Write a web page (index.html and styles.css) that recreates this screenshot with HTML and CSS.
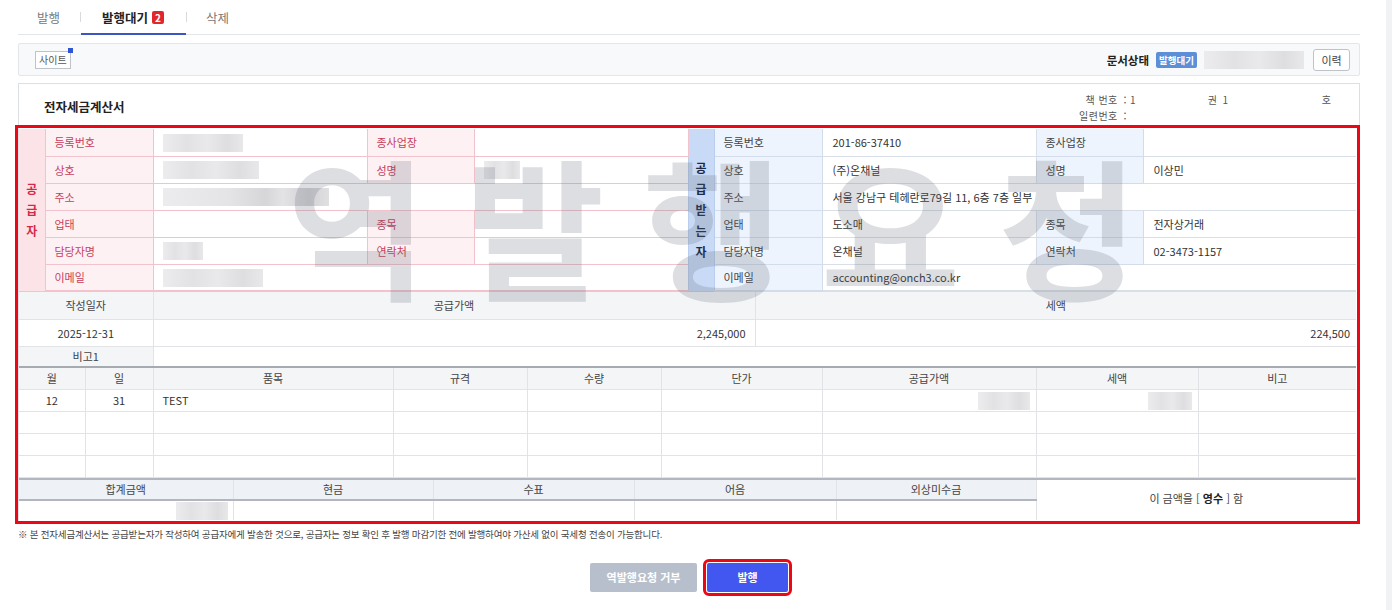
FILE: index.html
```html
<!DOCTYPE html>
<html lang="ko">
<head>
  <meta charset="UTF-8">
  <title>전자세금계산서 - 발행대기</title>
  <link rel="stylesheet" href="styles.css">
</head>
<body>
  <div class="page">
    <!-- Tabs -->
    <div class="tabs">
      <a class="tab">발행</a>
      <span class="tab-sep"></span>
      <a class="tab active">발행대기<span class="count">2</span></a>
      <span class="tab-sep"></span>
      <a class="tab">삭제</a>
    </div>

    <!-- Toolbar -->
    <div class="toolbar">
      <button class="chip">사이트<span class="chip-dot"></span></button>
      <div class="status">
        <span class="status-label">문서상태</span>
        <span class="status-badge">발행대기</span>
        <span class="blur status-blur"></span>
        <button class="btn-history">이력</button>
      </div>
    </div>

    <!-- Invoice document -->
    <div class="doc">
      <div class="doc-head">
        <h1>전자세금계산서</h1>
        <div class="book">
          <span><span class="book-label">책 번호</span> ：1</span>
          <span>권 &nbsp;1</span>
          <span>호</span>
          <span><span class="book-label">일련번호</span> ：</span>
        </div>
      </div>

      <div class="invoice">
        <table class="parties">
          <colgroup>
            <col class="c26"><col class="c108"><col class="c214"><col class="c107"><col class="c214">
            <col class="c26"><col class="c108"><col class="c214"><col class="c107"><col class="c213">
          </colgroup>
          <tr>
            <th class="side sup" rowspan="6">공<br>급<br>자</th>
            <th class="lab sup">등록번호</th>
            <td class="val sup"><span class="blur w80"></span></td>
            <th class="lab sup">종사업장</th>
            <td class="val sup"></td>
            <th class="side rec" rowspan="6">공<br>급<br>받<br>는<br>자</th>
            <th class="lab rec">등록번호</th>
            <td class="val rec">201-86-37410</td>
            <th class="lab rec">종사업장</th>
            <td class="val rec"></td>
          </tr>
          <tr>
            <th class="lab sup">상호</th>
            <td class="val sup"><span class="blur w96"></span></td>
            <th class="lab sup">성명</th>
            <td class="val sup"><span class="blur w36"></span></td>
            <th class="lab rec">상호</th>
            <td class="val rec">(주)온채널</td>
            <th class="lab rec">성명</th>
            <td class="val rec">이상민</td>
          </tr>
          <tr>
            <th class="lab sup">주소</th>
            <td class="val sup" colspan="3"><span class="blur w166 dark"></span></td>
            <th class="lab rec">주소</th>
            <td class="val rec" colspan="3">서울 강남구 테헤란로79길 11, 6층 7층 일부</td>
          </tr>
          <tr>
            <th class="lab sup">업태</th>
            <td class="val sup"></td>
            <th class="lab sup">종목</th>
            <td class="val sup"></td>
            <th class="lab rec">업태</th>
            <td class="val rec">도소매</td>
            <th class="lab rec">종목</th>
            <td class="val rec">전자상거래</td>
          </tr>
          <tr>
            <th class="lab sup">담당자명</th>
            <td class="val sup"><span class="blur w40"></span></td>
            <th class="lab sup">연락처</th>
            <td class="val sup"></td>
            <th class="lab rec">담당자명</th>
            <td class="val rec">온채널</td>
            <th class="lab rec">연락처</th>
            <td class="val rec">02-3473-1157</td>
          </tr>
          <tr class="last">
            <th class="lab sup">이메일</th>
            <td class="val sup" colspan="3"><span class="blur w100"></span></td>
            <th class="lab rec">이메일</th>
            <td class="val rec" colspan="3">accounting@onch3.co.kr</td>
          </tr>
        </table>

        <table class="summary">
          <colgroup><col class="c134"><col class="c602"><col class="c601"></colgroup>
          <tr class="head">
            <th>작성일자</th><th>공급가액</th><th>세액</th>
          </tr>
          <tr class="body">
            <td class="center">2025-12-31</td><td class="num">2,245,000</td><td class="num">224,500</td>
          </tr>
          <tr class="note last">
            <th>비고1</th><td colspan="2"></td>
          </tr>
        </table>

        <table class="items">
          <colgroup>
            <col class="c66"><col class="c68"><col class="c240"><col class="c134"><col class="c134">
            <col class="c161"><col class="c214"><col class="c162"><col class="c158">
          </colgroup>
          <tr class="head">
            <th>월</th><th>일</th><th>품목</th><th>규격</th><th>수량</th><th>단가</th><th>공급가액</th><th>세액</th><th>비고</th>
          </tr>
          <tr>
            <td class="center">12</td><td class="center">31</td><td>TEST</td><td></td><td></td><td></td>
            <td class="num"><span class="blur w52"></span></td><td class="num"><span class="blur w44"></span></td><td></td>
          </tr>
          <tr><td></td><td></td><td></td><td></td><td></td><td></td><td></td><td></td><td></td></tr>
          <tr><td></td><td></td><td></td><td></td><td></td><td></td><td></td><td></td><td></td></tr>
          <tr><td></td><td></td><td></td><td></td><td></td><td></td><td></td><td></td><td></td></tr>
        </table>

        <table class="totals">
          <colgroup>
            <col class="c214"><col class="c200"><col class="c201"><col class="c202"><col class="c200"><col class="c320">
          </colgroup>
          <tr class="head">
            <th>합계금액</th><th>현금</th><th>수표</th><th>어음</th><th>외상미수금</th>
            <td class="receipt" rowspan="2">이 금액을 [ <b>영수</b> ] 함</td>
          </tr>
          <tr class="body">
            <td class="num"><span class="blur w52"></span></td><td></td><td></td><td></td><td></td>
          </tr>
        </table>

        <div class="watermark">역발행요청</div>
      </div>
    </div>

    <p class="notice">※ 본 전자세금계산서는 공급받는자가 작성하여 공급자에게 발송한 것으로, 공급자는 정보 확인 후 발행 마감기한 전에 발행하여야 가산세 없이 국세청 전송이 가능합니다.</p>

    <div class="actions">
      <button class="btn-reject">역발행요청 거부</button>
      <button class="btn-issue">발행</button>
    </div>
  </div>
</body>
</html>
```

FILE: styles.css
```css
/* Reset */
* {
  margin: 0;
  padding: 0;
  box-sizing: border-box;
}
body {
  font-family: "Noto Sans CJK KR", "Noto Sans", sans-serif;
  font-size: 11px;
  color: #333;
  background: linear-gradient(90deg, #fff 1386px, #f1f2f4 1386px);
  min-height: 610px;
}
button {
  font-family: inherit;
  cursor: pointer;
}
.page {
  width: 1342px;
  margin-left: 18px;
}

/* Tabs */
.tabs {
  display: flex;
  align-items: center;
  height: 35px;
  border-bottom: 1px solid #e4e6ea;
}
.tab {
  display: flex;
  align-items: center;
  height: 35px;
  padding: 0 20px 0 19px;
  font-size: 12.5px;
  color: #777;
  margin-bottom: -1px;
}
.tab.active {
  padding: 0 22px 0 21px;
  color: #222;
  font-weight: 700;
  border-bottom: 2px solid #3b56c2;
  padding-top: 2px;
}
.tab-sep {
  width: 1px;
  height: 10px;
  background: #d8dadf;
}
.count {
  display: inline-block;
  width: 12px;
  height: 13px;
  margin-left: 4px;
  background: #e1262c;
  color: #fff;
  font-size: 10px;
  line-height: 13px;
  text-align: center;
  border-radius: 2px;
}

/* Toolbar */
.toolbar {
  display: flex;
  justify-content: space-between;
  align-items: center;
  height: 33px;
  margin-top: 8px;
  padding: 0 9px 0 16px;
  background: #f8f9fb;
  border: 1px solid #e3e6ea;
  border-radius: 2px;
}
.chip {
  position: relative;
  height: 18px;
  padding: 0 3px;
  background: #fff;
  border: 1px solid #bfc2c7;
  font-size: 10px;
  color: #555;
}
.chip-dot {
  position: absolute;
  top: -4px;
  right: -3px;
  width: 5px;
  height: 5px;
  background: #2f55d4;
}
.status {
  display: flex;
  align-items: center;
}
.status-label {
  font-weight: 700;
  font-size: 11.5px;
  color: #222;
  margin-right: 7px;
}
.status-badge {
  height: 16px;
  padding: 0 3px;
  background: #5d8fd9;
  color: #fff;
  font-size: 9.5px;
  font-weight: 700;
  line-height: 16px;
  border-radius: 2px;
  margin-right: 7px;
}
.status-blur {
  width: 100px;
  height: 16px;
  margin-right: 9px;
}
.btn-history {
  width: 37px;
  height: 22px;
  background: #fff;
  border: 1px solid #bfc3c9;
  border-radius: 3px;
  font-size: 11px;
  color: #444;
}

/* Document box */
.doc {
  margin-top: 7px;
  border: 1px solid #dcdfe3;
  padding-bottom: 3px;
}
.doc-head {
  display: flex;
  justify-content: space-between;
  align-items: center;
  height: 45px;
  padding: 0 28px 0 25px;
}
.doc-head h1 {
  font-size: 12.5px;
  font-weight: 700;
  color: #222;
}
.book {
  display: grid;
  grid-template-columns: 130px 114px auto;
  row-gap: 1px;
  font-size: 10px;
  color: #555;
  line-height: 15px;
  margin-top: 1px;
}
.book-label {
  display: inline-block;
  width: 40px;
  text-align: right;
  letter-spacing: 0.5px;
}

/* Invoice tables */
.invoice {
  position: relative;
  margin-right: 3px;
  outline: 3px solid #ec0716;
  outline-offset: 1px;
}
.invoice table {
  width: 100%;
  border-collapse: collapse;
  table-layout: fixed;
}
.invoice th,
.invoice td {
  height: 27px;
  padding: 0 9px;
  border: 1px solid #e1e3e7;
  font-size: 11px;
  font-weight: 400;
  text-align: left;
  white-space: nowrap;
  overflow: hidden;
}
.c26 { width: 26px; }
.c66 { width: 66px; }
.c68 { width: 68px; }
.c107 { width: 107px; }
.c108 { width: 108px; }
.c134 { width: 134px; }
.c158 { width: 158px; }
.c161 { width: 161px; }
.c162 { width: 162px; }
.c200 { width: 200px; }
.c201 { width: 201px; }
.c202 { width: 202px; }
.c213 { width: 213px; }
.c214 { width: 214px; }
.c240 { width: 240px; }
.c320 { width: 320px; }
.c601 { width: 601px; }
.c602 { width: 602px; }

/* Supplier / receiver block */
.parties tr:first-child th,
.parties tr:first-child td {
  border-top: 0;
}
.parties .side {
  padding: 0;
  text-align: center;
  font-weight: 700;
  font-size: 12px;
  line-height: 21px;
}
.parties .side.sup {
  background: #fce3e8;
  color: #d42a47;
  border-color: #f2c3cc;
  border-left: 0;
}
.parties .side.rec {
  background: #c8daf6;
  color: #1d2a47;
  border-color: #b9cdec;
}
.parties .lab.sup {
  background: #fef1f4;
  color: #c73e5b;
  border-color: #f2c3cc;
}
.parties .val.sup {
  border-color: #f2c3cc;
}
.parties .lab.rec {
  background: #eef4fd;
  color: #444;
  border-color: #d3dcea;
}
.parties .val.rec {
  border-color: #d9dfe8;
  padding-left: 10px;
}
.parties .last th,
.parties .last td,
.parties .last .side {
  border-bottom: 2px solid #a6aab1;
}

/* Summary */
.summary th,
.items th,
.totals th {
  background: #f4f5f7;
  text-align: center;
  color: #444;
}
.summary .head th {
  height: 27px;
  border-top: 0;
}
.summary .note th,
.summary .note td {
  height: 21px;
}
.summary .last th,
.summary .last td {
  border-bottom: 2px solid #a6aab1;
}
.invoice .center {
  text-align: center;
}
.invoice .num {
  text-align: right;
}
.summary td:last-child.num {
  padding-right: 6px;
}
.invoice tr > :first-child {
  border-left: 0;
}
.invoice tr > :last-child {
  border-right: 0;
}

/* Items */
.items th {
  height: 21px;
  border-top: 0;
}
.items td {
  height: 22px;
}
.items td.num {
  padding-right: 6px;
}

/* Totals */
.totals th {
  height: 21px;
  background: #eef1f6;
  border-top: 2px solid #b2b6be;
  border-bottom: 2px solid #b2b6be;
}
.totals td {
  height: 19px;
  border-bottom: 0;
}
.totals td.num {
  padding-right: 5px;
}
.totals .receipt {
  text-align: center;
  border-top: 2px solid #b2b6be;
  background: #fff;
  color: #444;
  padding-bottom: 3px;
}
.totals .receipt b {
  color: #222;
}

/* Blurred (masked) values */
.blur {
  display: inline-block;
  height: 18px;
  vertical-align: middle;
  background: linear-gradient(90deg, #ececee 0%, #e2e2e5 30%, #e9e9eb 55%, #dedee1 80%, #e8e8ea 100%);
}
.blur.dark {
  background: linear-gradient(90deg, #ececee 0%, #e4e4e6 40%, #d6d6d9 62%, #e3e3e5 72%, #d2d2d5 88%, #e0e0e2 100%);
}
.w36 { width: 36px; }
.w40 { width: 40px; }
.w44 { width: 44px; }
.w52 { width: 52px; }
.w80 { width: 80px; }
.w96 { width: 96px; }
.w100 { width: 100px; }
.w166 { width: 166px; }

/* Watermark over the table */
.watermark {
  position: absolute;
  top: 18px;
  left: 268px;
  font-size: 152px;
  font-weight: 700;
  line-height: 1;
  letter-spacing: 38px;
  color: rgba(95, 105, 120, 0.22);
  white-space: nowrap;
  pointer-events: none;
}

/* Footer */
.notice {
  margin-top: 2px;
  font-size: 9.5px;
  line-height: 16px;
  color: #444;
  letter-spacing: -0.2px;
}
.actions {
  display: flex;
  justify-content: center;
  gap: 10px;
  margin-top: 21px;
}
.btn-reject,
.btn-issue {
  height: 29px;
  border: 0;
  border-radius: 2px;
  color: #fff;
  font-size: 11px;
  font-weight: 700;
}
.btn-reject {
  width: 107px;
  background: #b8bfcc;
}
.btn-issue {
  width: 81px;
  background: #4257f0;
  outline: 3px solid #ec0716;
  outline-offset: 1px;
}
```
